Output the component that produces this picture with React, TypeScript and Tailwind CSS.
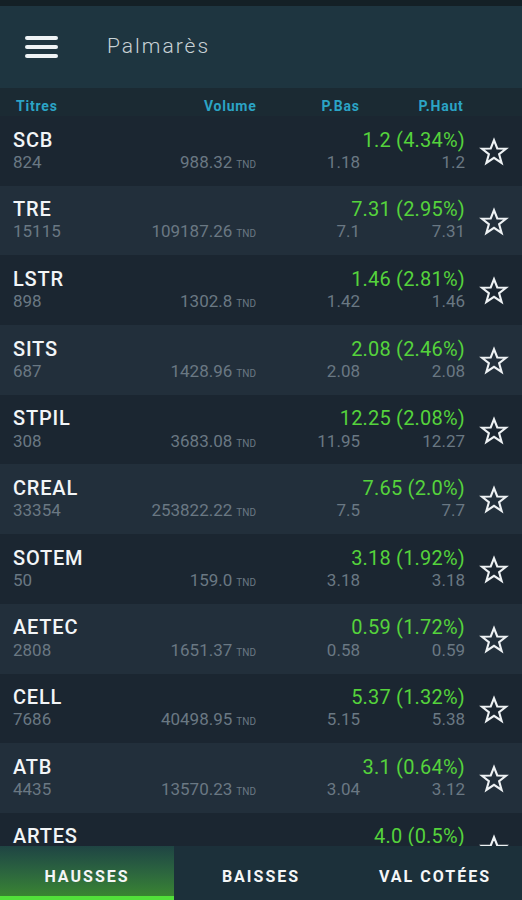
import React from 'react';

interface Quote {
  name: string;
  qty: string;
  volume: string;
  last: string;
  change: string;
  low: string;
  high: string;
}

const quotes: Quote[] = [
  { name: 'SCB', qty: '824', volume: '988.32', last: '1.2', change: '4.34%', low: '1.18', high: '1.2' },
  { name: 'TRE', qty: '15115', volume: '109187.26', last: '7.31', change: '2.95%', low: '7.1', high: '7.31' },
  { name: 'LSTR', qty: '898', volume: '1302.8', last: '1.46', change: '2.81%', low: '1.42', high: '1.46' },
  { name: 'SITS', qty: '687', volume: '1428.96', last: '2.08', change: '2.46%', low: '2.08', high: '2.08' },
  { name: 'STPIL', qty: '308', volume: '3683.08', last: '12.25', change: '2.08%', low: '11.95', high: '12.27' },
  { name: 'CREAL', qty: '33354', volume: '253822.22', last: '7.65', change: '2.0%', low: '7.5', high: '7.7' },
  { name: 'SOTEM', qty: '50', volume: '159.0', last: '3.18', change: '1.92%', low: '3.18', high: '3.18' },
  { name: 'AETEC', qty: '2808', volume: '1651.37', last: '0.59', change: '1.72%', low: '0.58', high: '0.59' },
  { name: 'CELL', qty: '7686', volume: '40498.95', last: '5.37', change: '1.32%', low: '5.15', high: '5.38' },
  { name: 'ATB', qty: '4435', volume: '13570.23', last: '3.1', change: '0.64%', low: '3.04', high: '3.12' },
  { name: 'ARTES', qty: '1520', volume: '6080.0', last: '4.0', change: '0.5%', low: '3.98', high: '4.0' },
];

const StarIcon = () => (
  <svg width="30" height="30" viewBox="0 0 24 24" fill="none" stroke="#eef2f4" strokeWidth={1.7} strokeLinejoin="miter">
    <polygon points="12,2.5 14.6,9.2 21.6,9.4 16.1,13.8 18.1,20.8 12,16.7 5.9,20.8 7.9,13.8 2.4,9.4 9.4,9.2" />
  </svg>
);

const Row: React.FC<{ q: Quote; light: boolean }> = ({ q, light }) => (
  <div className={`h-[69.7px] shrink-0 flex ${light ? 'bg-[#222f3b]' : 'bg-[#1b2631]'}`}>
    <div className="w-[465px] pl-[13px] pt-[11px] flex flex-col">
      <div className="h-[25px] flex justify-between items-center">
        <span className="text-[20px] font-medium tracking-[0.8px] text-[#f2f5f7]">{q.name}</span>
        <span className="text-[20px] tracking-[0.2px] text-[#55d33c]">{q.last} ({q.change})</span>
      </div>
      <div className="h-[21px] flex items-center text-[17px] text-[#6a7883]">
        <div className="w-[243px] flex justify-between items-baseline">
          <span>{q.qty}</span>
          <span>
            {q.volume}
            <span className="text-[10px] ml-[4px]">TND</span>
          </span>
        </div>
        <span className="w-[104px] text-right">{q.low}</span>
        <span className="w-[105px] text-right">{q.high}</span>
      </div>
    </div>
    <div className="flex-1 flex justify-center pt-[21px]">
      <StarIcon />
    </div>
  </div>
);

const App: React.FC = () => {
  return (
    <div className="h-[900px] w-[522px] flex flex-col overflow-hidden bg-[#1b2631] font-['Roboto',sans-serif]">
      <div className="h-[6px] bg-[#142026]" />

      <header className="h-[82px] bg-[#1e3540] flex items-center">
        <div className="ml-[25px] w-[33px] flex flex-col gap-[5px]">
          <span className="h-[4px] rounded-sm bg-[#eef3f5]" />
          <span className="h-[4px] rounded-sm bg-[#eef3f5]" />
          <span className="h-[4px] rounded-sm bg-[#eef3f5]" />
        </div>
        <h1 className="ml-[49px] text-[21px] font-light tracking-[2px] text-[#c9d2d6]">Palmarès</h1>
      </header>

      <div className="h-[28px] bg-[#1b2a33] flex items-center pt-[8px] text-[14px] font-bold tracking-[0.8px] text-[#2ba4c6]">
        <span className="ml-[16px]">Titres</span>
        <span className="w-[199px] text-right">Volume</span>
        <span className="w-[103px] text-right">P.Bas</span>
        <span className="w-[104px] text-right">P.Haut</span>
      </div>

      <div className="flex-1 flex flex-col overflow-hidden">
        {quotes.map((q, i) => (
          <Row key={q.name} q={q} light={i % 2 === 1} />
        ))}
      </div>

      <nav className="h-[54px] shrink-0 flex bg-[#1c303a] text-[16px] font-bold tracking-[2px] text-[#f4f6f7]">
        <div className="w-[174px] flex flex-col bg-gradient-to-b from-[#1f4443] to-[#3c8a2c]">
          <span className="flex-1 flex items-center justify-center pt-[12px]">HAUSSES</span>
          <span className="h-[4px] bg-[#52e03a]" />
        </div>
        <div className="w-[174px] flex items-center justify-center pt-[8px]">BAISSES</div>
        <div className="w-[174px] flex items-center justify-center pt-[8px]">VAL COTÉES</div>
      </nav>
    </div>
  );
};

export default App;
